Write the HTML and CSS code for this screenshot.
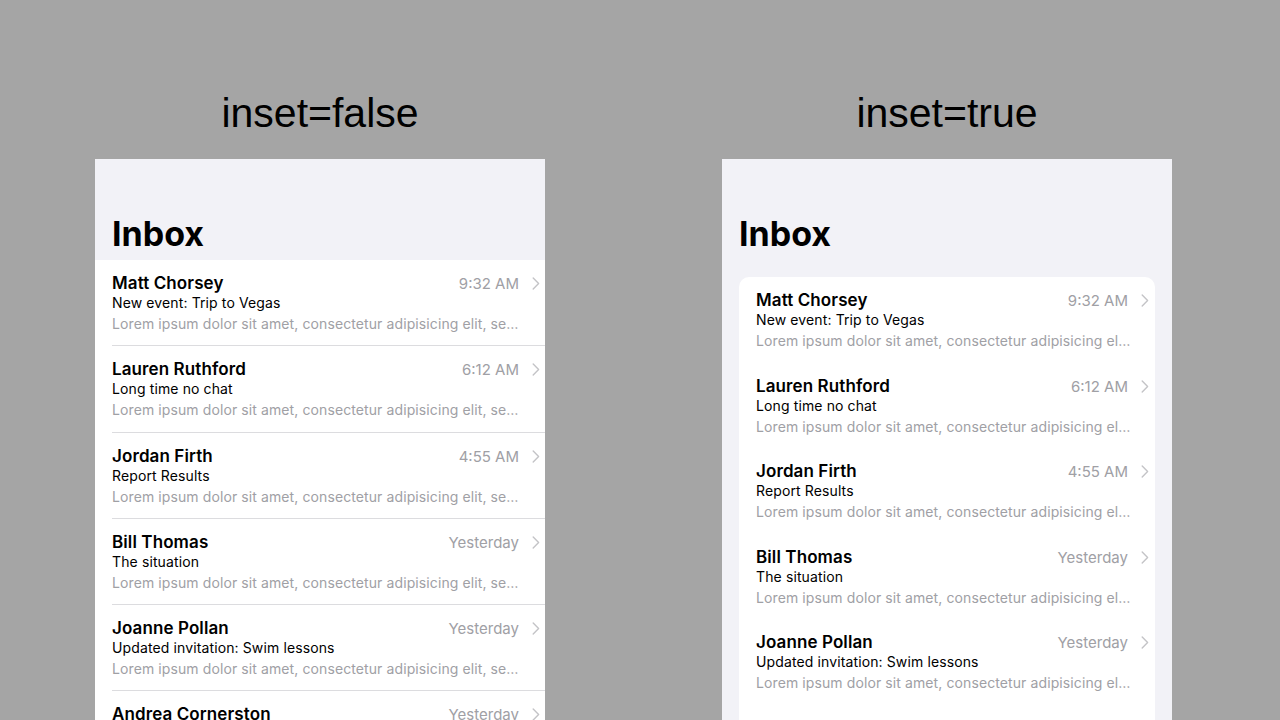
FILE: index.html
```html
<!DOCTYPE html>
<html lang="en">

<head>
    <meta charset="UTF-8">
    <meta name="viewport" content="width=device-width, initial-scale=1.0">
    <title>Inbox lists</title>
    <link rel="stylesheet" href="styles.css">
</head>

<body>
    <div class="demo">
        <div class="column">
            <div class="caption">inset=false</div>
            <div class="phone">
                <div class="header">
                    <h1 class="title">Inbox</h1>
                </div>
                <div class="list" id="listPlain"></div>
            </div>
        </div>
        <div class="column">
            <div class="caption">inset=true</div>
            <div class="phone">
                <div class="header">
                    <h1 class="title">Inbox</h1>
                </div>
                <div class="list list-inset" id="listInset"></div>
            </div>
        </div>
    </div>
    <script>
        let mails = [
            { name: "Matt Chorsey", time: "9:32 AM", subject: "New event: Trip to Vegas" },
            { name: "Lauren Ruthford", time: "6:12 AM", subject: "Long time no chat" },
            { name: "Jordan Firth", time: "4:55 AM", subject: "Report Results" },
            { name: "Bill Thomas", time: "Yesterday", subject: "The situation" },
            { name: "Joanne Pollan", time: "Yesterday", subject: "Updated invitation: Swim lessons" },
            { name: "Andrea Cornerston", time: "Yesterday", subject: "Last minute ask" },
            { name: "Moe Chamont", time: "Yesterday", subject: "Family Calendar - Version 1" }
        ];
        let preview = "Lorem ipsum dolor sit amet, consectetur adipisicing elit, sed do eiusmod tempor incididunt ut labore et dolore magna aliqua.";

        function render(id) {
            let mess = "";
            for (let i = 0; i < mails.length; i++) {
                mess += `
            <div class="item">
                <div class="item-inner">
                    <div class="item-text">
                        <div class="item-top">
                            <span class="item-name">${mails[i].name}</span>
                            <span class="item-time">${mails[i].time}</span>
                        </div>
                        <div class="item-subject">${mails[i].subject}</div>
                        <div class="item-preview">${preview}</div>
                    </div>
                    <svg class="chevron" width="8" height="13" viewBox="0 0 8 13">
                        <path d="M1.2 1 L6.6 6.5 L1.2 12" fill="none" stroke="#c4c4c7" stroke-width="1.4" stroke-linecap="round" stroke-linejoin="round" />
                    </svg>
                </div>
            </div>
        `;
            }
            document.getElementById(id).innerHTML = mess;
        }

        render("listPlain");
        render("listInset");
    </script>
</body>

</html>
```

FILE: styles.css
```css
* {
    margin: 0;
    padding: 0;
    box-sizing: border-box;
}

body {
    background-color: #a5a5a5;
    overflow: hidden;
    height: 720px;
}

.demo {
    display: grid;
    grid-template-columns: 450px 450px;
    column-gap: 177px;
    padding-left: 95px;
    padding-top: 89px;
}

.caption {
    font-family: "Liberation Sans", Arial, sans-serif;
    font-size: 41px;
    line-height: 48px;
    color: #000;
    text-align: center;
    margin-bottom: 22px;
}

.phone {
    height: 600px;
    background-color: #f2f2f7;
    overflow: hidden;
    font-family: Inter, "Noto Sans", sans-serif;
    color: #000;
}

.header {
    padding: 54px 17px 6px 17px;
}

.title {
    font-size: 34px;
    line-height: 41px;
    font-weight: 700;
}

.list {
    background-color: #ffffff;
}

.list-inset {
    margin: 17px 17px 0 17px;
    border-radius: 10px;
    overflow: hidden;
}

.item {
    padding-left: 17px;
}

.item-inner {
    display: flex;
    align-items: flex-start;
    padding-top: 12px;
    padding-bottom: 11.3px;
    border-bottom: 1px solid #dcdcdf;
}

.list-inset .item-inner {
    border-bottom: none;
    padding-bottom: 11.5px;
}

.item-text {
    flex: 1;
    min-width: 0;
}

.item-top {
    display: flex;
    justify-content: space-between;
    align-items: baseline;
    height: 22px;
}

.item-name {
    font-size: 17px;
    line-height: 22px;
    font-weight: 600;
    letter-spacing: 0.1px;
}

.item-time {
    font-size: 15px;
    color: #a0a0a5;
    padding-right: 3px;
}

.item-subject {
    font-size: 14px;
    line-height: 18px;
    letter-spacing: 0.12px;
}

.item-preview {
    font-size: 14px;
    line-height: 20px;
    margin-top: 2px;
    color: #a0a0a5;
    letter-spacing: 0.1px;
    white-space: nowrap;
    overflow: hidden;
    text-overflow: ellipsis;
}

.chevron {
    flex-shrink: 0;
    margin-top: 5px;
    margin-left: 10px;
    margin-right: 5px;
}

.list-inset .chevron {
    margin-right: 6px;
}
```
